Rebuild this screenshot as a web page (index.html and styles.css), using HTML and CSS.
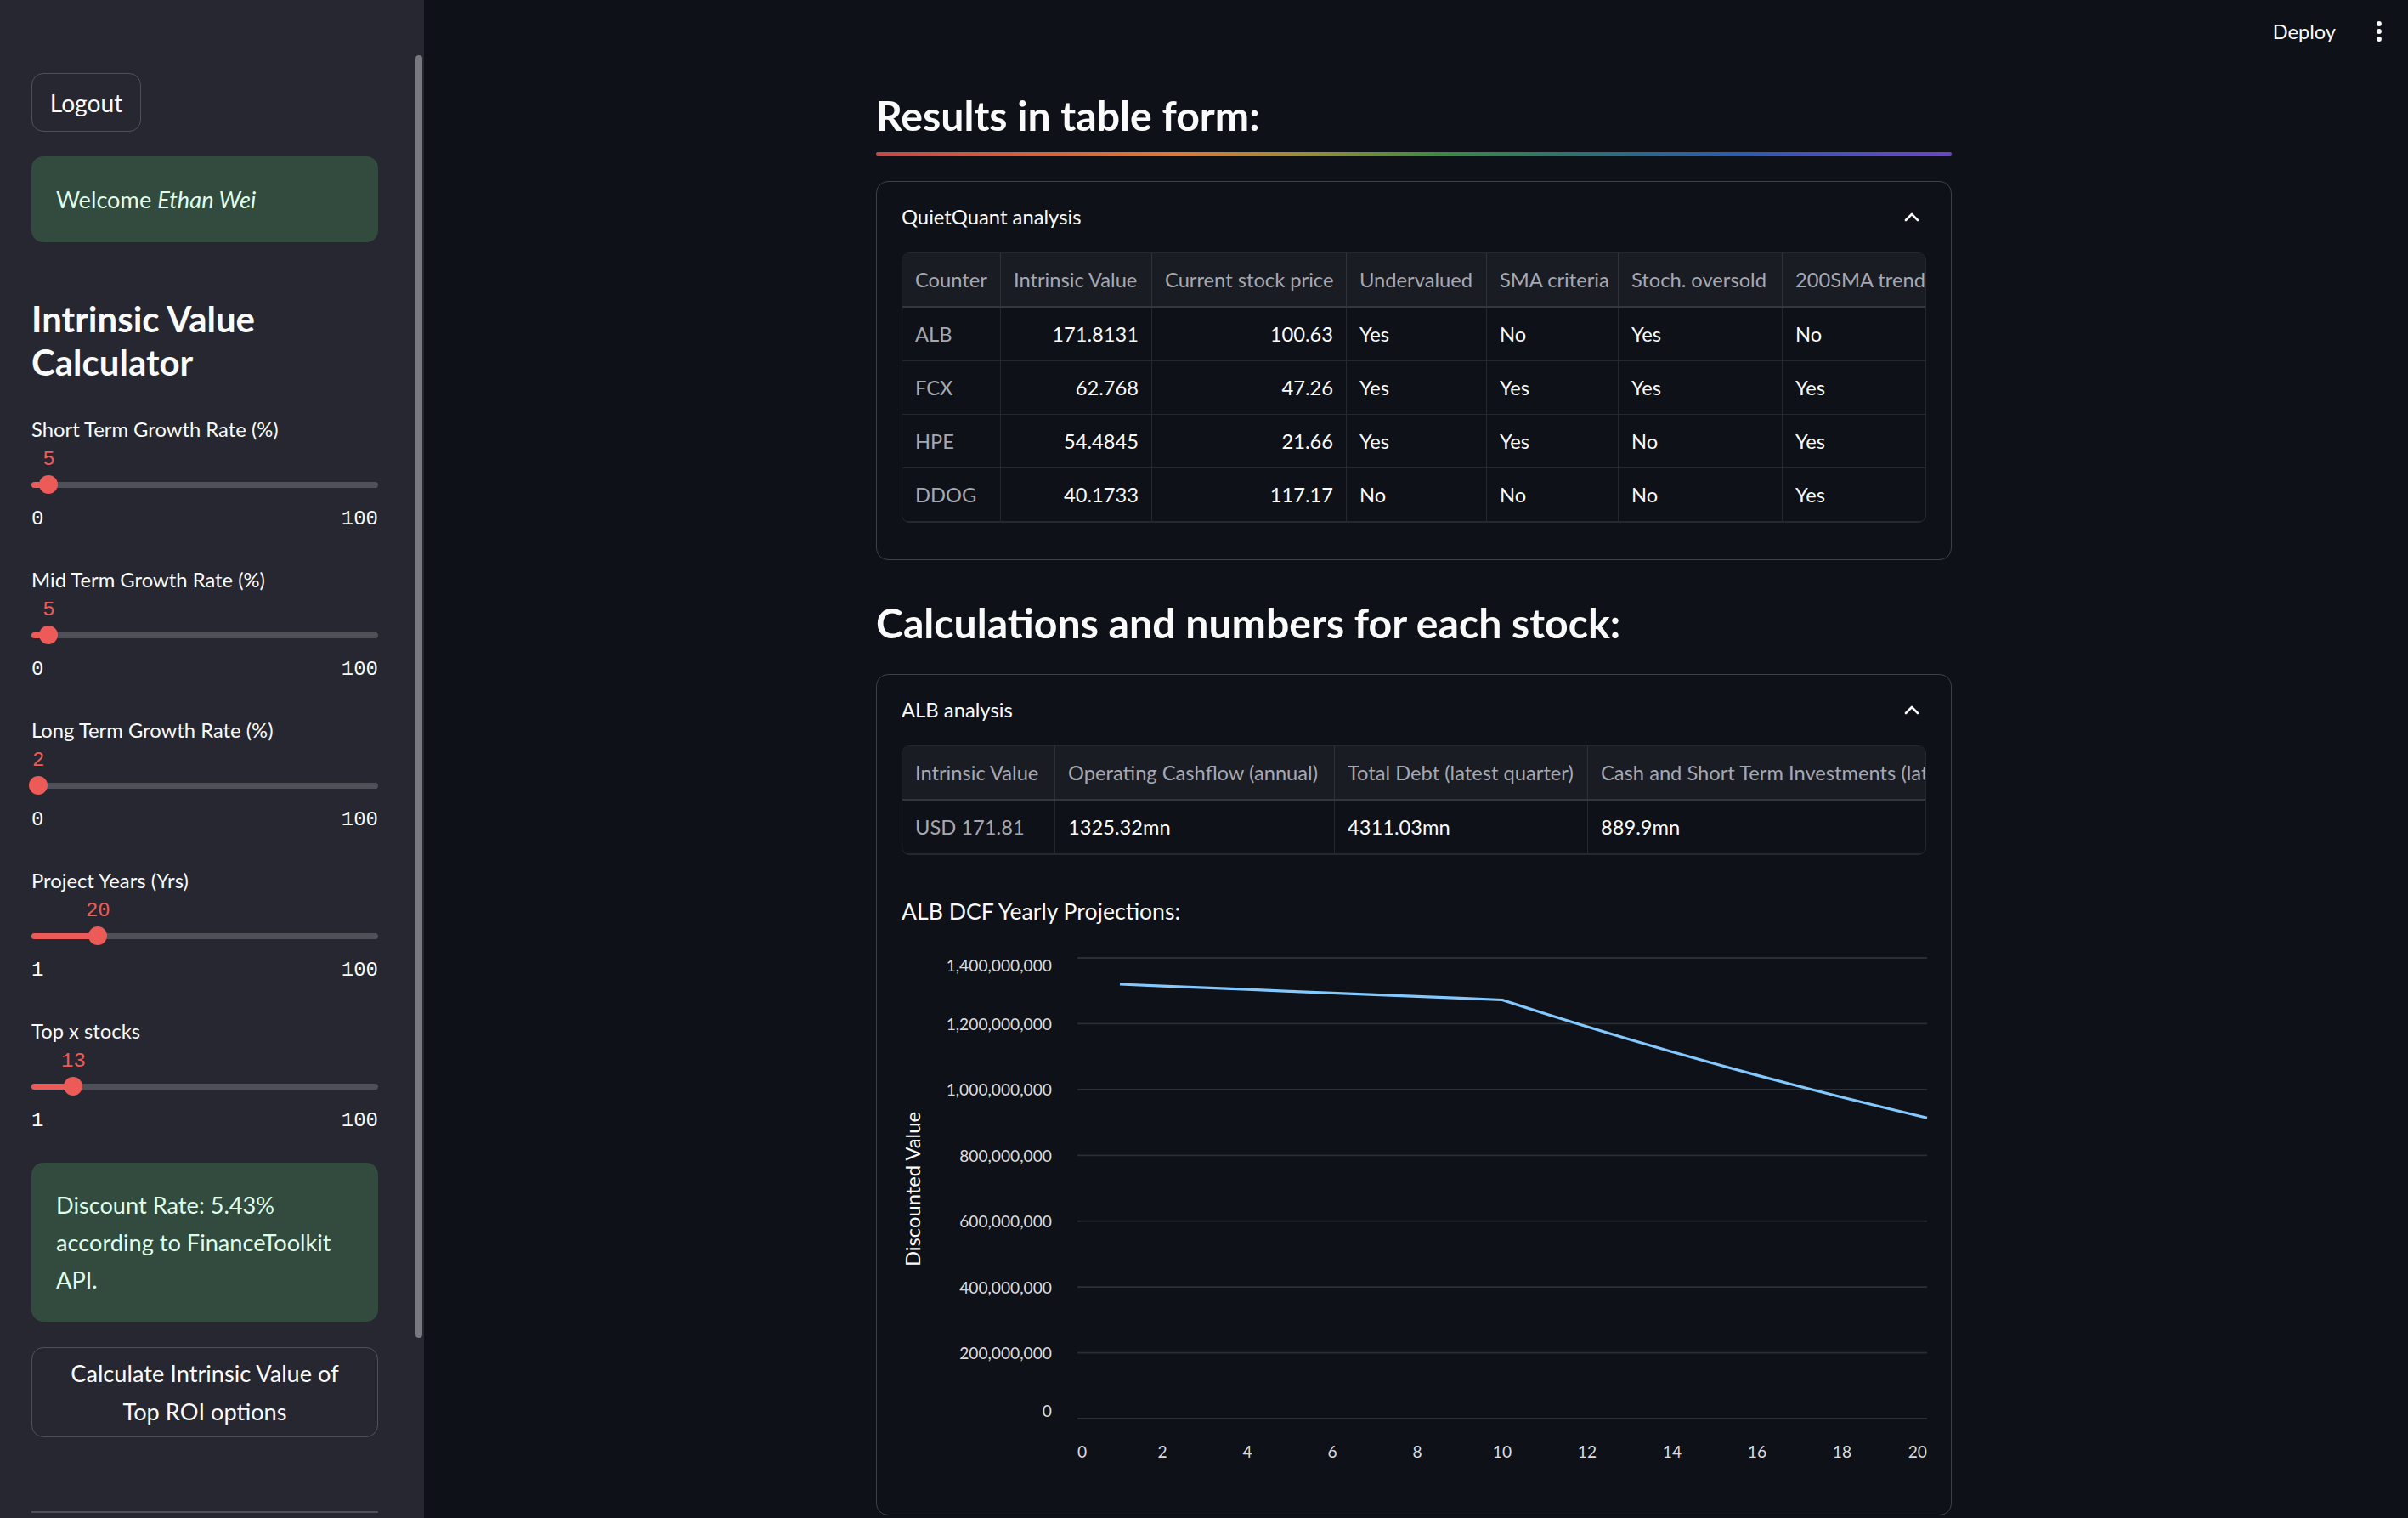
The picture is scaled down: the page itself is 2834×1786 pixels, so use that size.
FILE: index.html
```html
<!DOCTYPE html>
<html lang="en">
<head>
<meta charset="utf-8">
<title>Intrinsic Value Calculator</title>
<link rel="stylesheet" href="styles.css">
</head>
<body>
<div class="app">
  <aside class="sidebar">
    <div class="scroll-thumb"></div>
    <button class="btn btn-logout">Logout</button>
    <div class="alert alert-welcome">Welcome <em>Ethan Wei</em></div>
    <h2 class="side-title">Intrinsic Value Calculator</h2>

    <div class="slider">
      <div class="slider-label">Short Term Growth Rate (%)</div>
      <div class="slider-value-row"><span class="slider-value" style="left:5%">5</span></div>
      <div class="slider-track-row"><div class="slider-track"><div class="slider-fill" style="width:5%"></div><div class="slider-thumb" style="left:5%"></div></div></div>
      <div class="slider-ticks"><span>0</span><span>100</span></div>
    </div>
    <div class="slider">
      <div class="slider-label">Mid Term Growth Rate (%)</div>
      <div class="slider-value-row"><span class="slider-value" style="left:5%">5</span></div>
      <div class="slider-track-row"><div class="slider-track"><div class="slider-fill" style="width:5%"></div><div class="slider-thumb" style="left:5%"></div></div></div>
      <div class="slider-ticks"><span>0</span><span>100</span></div>
    </div>
    <div class="slider">
      <div class="slider-label">Long Term Growth Rate (%)</div>
      <div class="slider-value-row"><span class="slider-value" style="left:2%">2</span></div>
      <div class="slider-track-row"><div class="slider-track"><div class="slider-fill" style="width:2%"></div><div class="slider-thumb" style="left:2%"></div></div></div>
      <div class="slider-ticks"><span>0</span><span>100</span></div>
    </div>
    <div class="slider">
      <div class="slider-label">Project Years (Yrs)</div>
      <div class="slider-value-row"><span class="slider-value" style="left:19.19%">20</span></div>
      <div class="slider-track-row"><div class="slider-track"><div class="slider-fill" style="width:19.19%"></div><div class="slider-thumb" style="left:19.19%"></div></div></div>
      <div class="slider-ticks"><span>1</span><span>100</span></div>
    </div>
    <div class="slider">
      <div class="slider-label">Top x stocks</div>
      <div class="slider-value-row"><span class="slider-value" style="left:12.12%">13</span></div>
      <div class="slider-track-row"><div class="slider-track"><div class="slider-fill" style="width:12.12%"></div><div class="slider-thumb" style="left:12.12%"></div></div></div>
      <div class="slider-ticks"><span>1</span><span>100</span></div>
    </div>

    <div class="alert alert-discount">Discount Rate: 5.43%<br>according to FinanceToolkit<br>API.</div>
    <button class="btn btn-calc">Calculate Intrinsic Value of<br>Top ROI options</button>
    <hr class="side-rule">
  </aside>

  <main class="main">
    <header class="topbar">
      <span class="deploy">Deploy</span>
      <svg class="menu-dots" width="6" height="24" viewBox="0 0 6 24"><circle cx="3" cy="3" r="2.9"/><circle cx="3" cy="12" r="2.9"/><circle cx="3" cy="21" r="2.9"/></svg>
    </header>

    <div class="block">
      <h2 class="title">Results in table form:</h2>
      <div class="rainbow"></div>

      <section class="expander">
        <div class="exp-head">
          <span>QuietQuant analysis</span>
          <svg class="chev" width="18" height="12" viewBox="0 0 18 12"><path d="M2 10 L9 3 L16 10"/></svg>
        </div>
        <div class="grid">
          <div class="grid-row grid-head cols-a">
            <div class="cell">Counter</div><div class="cell">Intrinsic Value</div><div class="cell">Current stock price</div><div class="cell">Undervalued</div><div class="cell">SMA criteria</div><div class="cell">Stoch. oversold</div><div class="cell">200SMA trend up</div>
          </div>
          <div class="grid-row cols-a">
            <div class="cell idx">ALB</div><div class="cell num">171.8131</div><div class="cell num">100.63</div><div class="cell">Yes</div><div class="cell">No</div><div class="cell">Yes</div><div class="cell">No</div>
          </div>
          <div class="grid-row cols-a">
            <div class="cell idx">FCX</div><div class="cell num">62.768</div><div class="cell num">47.26</div><div class="cell">Yes</div><div class="cell">Yes</div><div class="cell">Yes</div><div class="cell">Yes</div>
          </div>
          <div class="grid-row cols-a">
            <div class="cell idx">HPE</div><div class="cell num">54.4845</div><div class="cell num">21.66</div><div class="cell">Yes</div><div class="cell">Yes</div><div class="cell">No</div><div class="cell">Yes</div>
          </div>
          <div class="grid-row cols-a">
            <div class="cell idx">DDOG</div><div class="cell num">40.1733</div><div class="cell num">117.17</div><div class="cell">No</div><div class="cell">No</div><div class="cell">No</div><div class="cell">Yes</div>
          </div>
        </div>
      </section>

      <h2 class="title title-2">Calculations and numbers for each stock:</h2>

      <section class="expander expander-2">
        <div class="exp-head">
          <span>ALB analysis</span>
          <svg class="chev" width="18" height="12" viewBox="0 0 18 12"><path d="M2 10 L9 3 L16 10"/></svg>
        </div>
        <div class="grid">
          <div class="grid-row grid-head cols-b">
            <div class="cell">Intrinsic Value</div><div class="cell">Operating Cashflow (annual)</div><div class="cell">Total Debt (latest quarter)</div><div class="cell">Cash and Short Term Investments (latest quarter)</div>
          </div>
          <div class="grid-row cols-b">
            <div class="cell idx">USD 171.81</div><div class="cell">1325.32mn</div><div class="cell">4311.03mn</div><div class="cell">889.9mn</div>
          </div>
        </div>

        <p class="chart-title">ALB DCF Yearly Projections:</p>
        <svg class="chart" width="1207" height="640" viewBox="0 0 1207 640">
          <g class="gridlines">
            <line x1="207" x2="1207" y1="28" y2="28"/>
            <line x1="207" x2="1207" y1="105.43" y2="105.43"/>
            <line x1="207" x2="1207" y1="182.86" y2="182.86"/>
            <line x1="207" x2="1207" y1="260.29" y2="260.29"/>
            <line x1="207" x2="1207" y1="337.71" y2="337.71"/>
            <line x1="207" x2="1207" y1="415.14" y2="415.14"/>
            <line x1="207" x2="1207" y1="492.57" y2="492.57"/>
            <line x1="207" x2="1207" y1="570" y2="570"/>
          </g>
          <g class="ylabels">
            <text x="177" y="36">1,400,000,000</text>
            <text x="177" y="105.43">1,200,000,000</text>
            <text x="177" y="182.86">1,000,000,000</text>
            <text x="177" y="260.29">800,000,000</text>
            <text x="177" y="337.71">600,000,000</text>
            <text x="177" y="415.14">400,000,000</text>
            <text x="177" y="492.57">200,000,000</text>
            <text x="177" y="560">0</text>
          </g>
          <g class="xlabels">
            <text x="207" y="608" class="start">0</text>
            <text x="307" y="608">2</text>
            <text x="407" y="608">4</text>
            <text x="507" y="608">6</text>
            <text x="607" y="608">8</text>
            <text x="707" y="608">10</text>
            <text x="807" y="608">12</text>
            <text x="907" y="608">14</text>
            <text x="1007" y="608">16</text>
            <text x="1107" y="608">18</text>
            <text x="1207" y="608" class="end">20</text>
          </g>
          <text class="axis-title" transform="translate(13 300) rotate(-90)">Discounted Value</text>
          <polyline class="series" points="257,59.0 307,61.1 357,63.2 407,65.2 457,67.3 507,69.3 557,71.4 607,73.4 657,75.4 707,77.5 757,93.5 807,109.0 857,124.0 907,138.5 957,152.5 1007,166.1 1057,179.3 1107,192.0 1157,204.3 1207,216.2"/>
        </svg>
      </section>
    </div>
  </main>
</div>
</body>
</html>
```

FILE: styles.css
```css
* { box-sizing: border-box; }

html, body {
  margin: 0;
  padding: 0;
  height: 100%;
  overflow: hidden;
}

body {
  background: #0e1117;
  color: #fafafa;
  font-family: Lato, "Source Sans Pro", "Noto Sans", sans-serif;
}

.app {
  display: flex;
  height: 1786px;
}

/* ---------- Sidebar ---------- */
.sidebar {
  position: relative;
  flex: 0 0 499px;
  width: 499px;
  height: 100%;
  background: #262730;
  padding: 86px 54px 0 37px;
  overflow: hidden;
  display: flex;
  flex-direction: column;
  align-items: stretch;
}

.scroll-thumb {
  position: absolute;
  left: 489px;
  top: 65px;
  width: 8px;
  height: 1509px;
  border-radius: 4px;
  background: #78787f;
}

.btn {
  font-family: inherit;
  color: #fafafa;
  background: transparent;
  border: 1px solid rgba(250, 250, 250, 0.2);
  border-radius: 14px;
  cursor: pointer;
}

.btn-logout {
  align-self: flex-start;
  width: 129px;
  height: 69px;
  padding: 0;
  font-size: 28.2px;
}

.alert {
  border-radius: 14px;
  background: #334a3e;
  color: #dffde9;
  font-size: 27.2px;
}

.alert-welcome {
  margin-top: 29px;
  padding: 27px 29px;
  line-height: 47px;
}

.side-title {
  margin: 65px 0 0;
  font-size: 42px;
  line-height: 51px;
  font-weight: 700;
}

.slider { margin-top: 37px; }
.side-title + .slider { margin-top: 36px; }

.slider-label {
  height: 34px;
  line-height: 34px;
  font-size: 23.8px;
  white-space: nowrap;
}

.slider-value-row {
  position: relative;
  height: 38px;
}

.slider-value {
  position: absolute;
  top: 0;
  line-height: 38px;
  transform: translateX(-50%);
  font-family: "Liberation Mono", "DejaVu Sans Mono", monospace;
  font-size: 24px;
  color: #ec5b57;
}

.slider-track-row {
  position: relative;
  height: 20px;
}

.slider-track {
  position: absolute;
  left: 0;
  right: 0;
  top: 6.5px;
  height: 7px;
  border-radius: 4px;
  background: #4f5058;
}

.slider-fill {
  position: absolute;
  left: 0;
  top: 0;
  bottom: 0;
  border-radius: 4px;
  background: #ec5b57;
}

.slider-thumb {
  position: absolute;
  top: 50%;
  width: 22px;
  height: 22px;
  border-radius: 50%;
  background: #ec5b57;
  transform: translate(-50%, -50%);
}

.slider-ticks {
  margin-top: 14px;
  height: 34px;
  line-height: 34px;
  display: flex;
  justify-content: space-between;
  font-family: "Liberation Mono", "DejaVu Sans Mono", monospace;
  font-size: 24px;
  color: #fafafa;
}

.alert-discount {
  margin-top: 32px;
  padding: 28px 29px 27px;
  line-height: 44px;
}

.btn-calc {
  margin-top: 30px;
  width: 100%;
  padding: 7px 0;
  font-size: 27.2px;
  line-height: 45px;
  text-align: center;
}

.side-rule {
  margin: 87px 0 0;
  border: 0;
  border-top: 2px solid rgba(250, 250, 250, 0.2);
}

/* ---------- Main ---------- */
.main {
  flex: 1;
  height: 100%;
  overflow: hidden;
  display: flex;
  flex-direction: column;
}

.topbar {
  flex: none;
  height: 73px;
  display: flex;
  justify-content: flex-end;
  align-items: center;
  padding-right: 31px;
}

.deploy {
  font-size: 23.6px;
  margin-right: 48px;
}

.menu-dots { fill: #fafafa; }

.block {
  flex: none;
  width: 1266px;
  margin-left: 532px;
}

.title {
  margin: 32px 0 0;
  font-size: 48.2px;
  line-height: 60px;
  font-weight: 700;
  white-space: nowrap;
}

.title-2 { margin-top: 43px; }

.rainbow {
  margin-top: 14px;
  height: 3.6px;
  border-radius: 2px;
  background: linear-gradient(90deg, #c24a4a 0%, #dc7a36 28%, #9a8c3c 40%, #3f8a42 52%, #2f7070 65%, #2c5bb0 80%, #6c45c4 100%);
}

.expander {
  margin-top: 30px;
  border: 1px solid rgba(250, 250, 250, 0.2);
  border-radius: 14px;
  padding: 0 29px 43px;
}

.expander-2 { margin-top: 31px; }

.exp-head {
  height: 83px;
  display: flex;
  align-items: center;
  justify-content: space-between;
  font-size: 23.8px;
}

.chev {
  margin-right: 8px;
}

.chev path {
  fill: none;
  stroke: #fafafa;
  stroke-width: 2.6;
  stroke-linecap: round;
  stroke-linejoin: round;
}

/* data grid */
.grid {
  border: 1px solid rgba(250, 250, 250, 0.1);
  border-radius: 9px;
  overflow: hidden;
  font-size: 23.7px;
}

.grid-row {
  display: grid;
  height: 63px;
  border-bottom: 1px solid rgba(250, 250, 250, 0.1);
}

.grid-head {
  height: 64px;
  background: #1a1c24;
  border-bottom: 2px solid rgba(250, 250, 250, 0.12);
  color: #a6a8b1;
}

.cols-a { grid-template-columns: 116px 178px 229px 165px 155px 193px 280px; }
.cols-b { grid-template-columns: 180px 329px 298px 500px; }

.cell {
  display: flex;
  align-items: center;
  padding: 0 15px;
  border-right: 1px solid rgba(250, 250, 250, 0.1);
  white-space: nowrap;
  overflow: hidden;
}

.cell.num { justify-content: flex-end; }
.cell.idx { color: #a6a8b1; }

.chart-title {
  margin: 43px 0 0;
  font-size: 26.6px;
  line-height: 46px;
}

.chart {
  display: block;
  margin-top: 4px;
  overflow: visible;
}

.gridlines line {
  stroke: rgba(250, 250, 250, 0.13);
  stroke-width: 1.8;
}

.ylabels text,
.xlabels text {
  font-family: Lato, "Source Sans Pro", sans-serif;
  font-size: 19.2px;
  fill: #dcdcdf;
  dominant-baseline: central;
}

.ylabels text { text-anchor: end; }
.xlabels text { text-anchor: middle; }
.xlabels text.start { text-anchor: start; }
.xlabels text.end { text-anchor: end; }

.axis-title {
  font-family: Lato, "Source Sans Pro", sans-serif;
  font-size: 23.8px;
  fill: #fafafa;
  text-anchor: middle;
  dominant-baseline: central;
}

.series {
  fill: none;
  stroke: #83c9ff;
  stroke-width: 3.2;
  stroke-linejoin: round;
}
```
